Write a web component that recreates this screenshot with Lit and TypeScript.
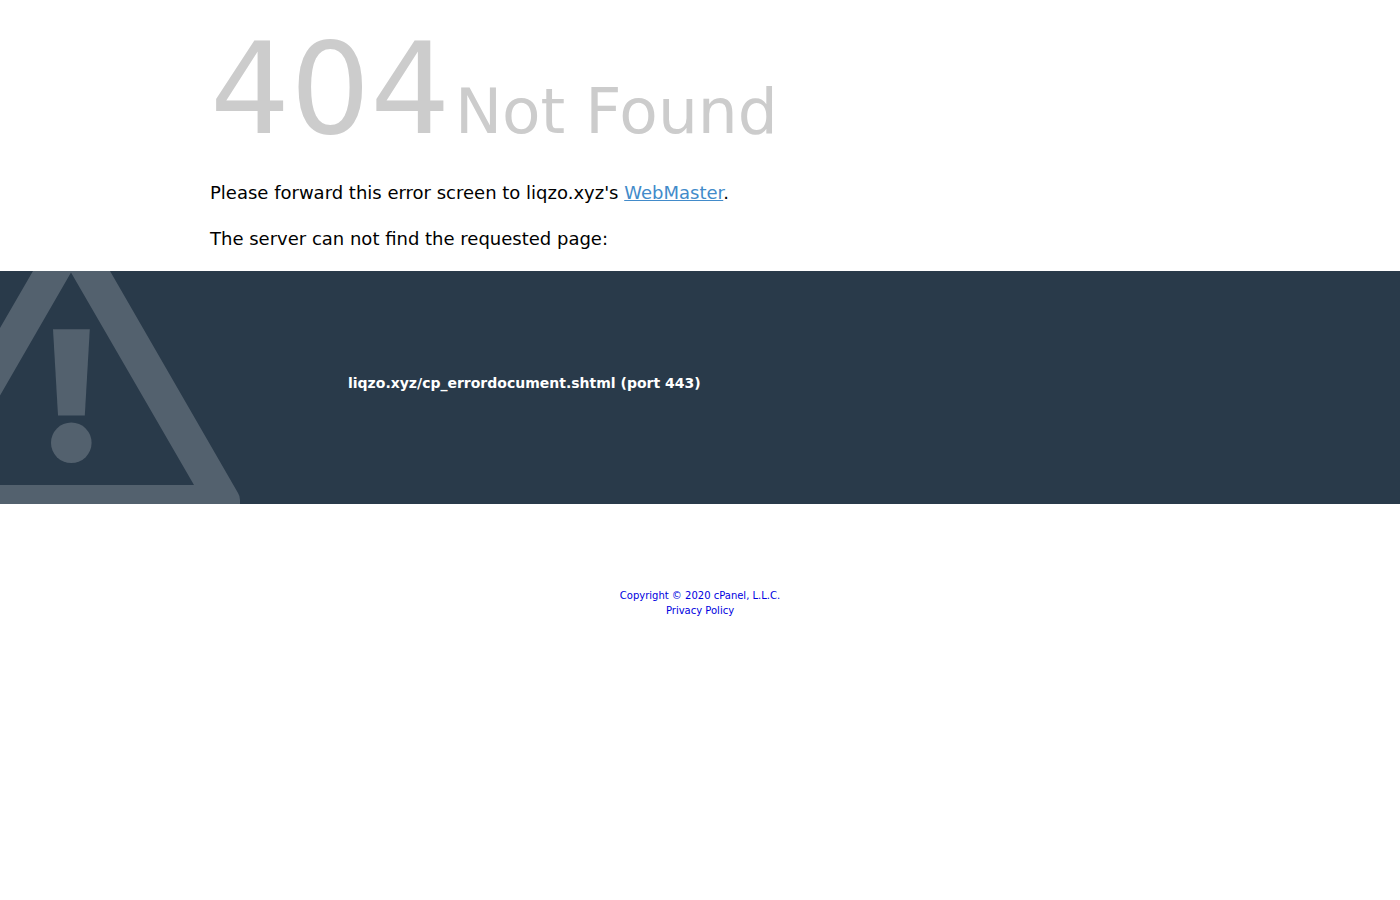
import { LitElement, html, css } from "lit";
import { customElement, property } from "lit/decorators.js";

@customElement("app-root")
export class AppRoot extends LitElement {
  static styles = css`
    :host {
      display: block;
      font-family: "DejaVu Sans", sans-serif;
      font-size: 14px;
      line-height: 20px;
      color: #000;
      background: #fff;
    }
    .container {
      margin: 0 15%;
    }
    .status {
      margin: 0;
      padding-top: 4px;
      font-size: 14px;
      font-weight: 400;
      color: #ccc;
    }
    .code {
      font-size: 126px;
      line-height: 172px;
    }
    .reason {
      font-size: 63px;
      line-height: 64px;
    }
    .lead {
      margin: 0;
      font-size: 18px;
      line-height: 34px;
    }
    .lead + .lead {
      margin-top: 12px;
      padding-bottom: 15px;
    }
    .lead a {
      color: #428bca;
    }
    .panel {
      display: flex;
      align-items: center;
      overflow: hidden;
      background: #293a4a;
      color: #fff;
    }
    .art {
      flex: none;
      display: block;
      width: 240px;
      height: 233px;
    }
    .detail {
      margin-left: 108px;
      padding-bottom: 10px;
      font-weight: 700;
    }
    footer {
      padding: 84px 0 20px;
      text-align: center;
      font-size: 10px;
      line-height: 15px;
    }
    footer a {
      display: block;
      width: max-content;
      margin: 0 auto;
      color: #0000e0;
      text-decoration: none;
    }
  `;

  @property() host = "liqzo.xyz";

  render() {
    return html`
      <header class="container">
        <h1 class="status"><span class="code">404</span> <span class="reason">Not Found</span></h1>
        <p class="lead">
          Please forward this error screen to ${this.host}'s <a href="mailto:webmaster@${this.host}">WebMaster</a>.
        </p>
        <p class="lead">The server can not find the requested page:</p>
      </header>
      <main class="panel">
        <svg class="art" viewBox="0 0 240 233" fill="#53616e" aria-hidden="true">
          <path d="M33 0H110L238 222Q240 225 240 229V233H0V214H194L71 1.5L0 124.500V57Z" />
          <path d="M53 58.200H89.800L84.800 144.600H58Z" />
          <circle cx="71.3" cy="171.800" r="20.3" />
        </svg>
        <div class="detail">${this.host}/cp_errordocument.shtml (port 443)</div>
      </main>
      <footer>
        <a href="#copyright">Copyright © 2020 cPanel, L.L.C.</a>
        <a href="#privacy">Privacy Policy</a>
      </footer>
    `;
  }
}
